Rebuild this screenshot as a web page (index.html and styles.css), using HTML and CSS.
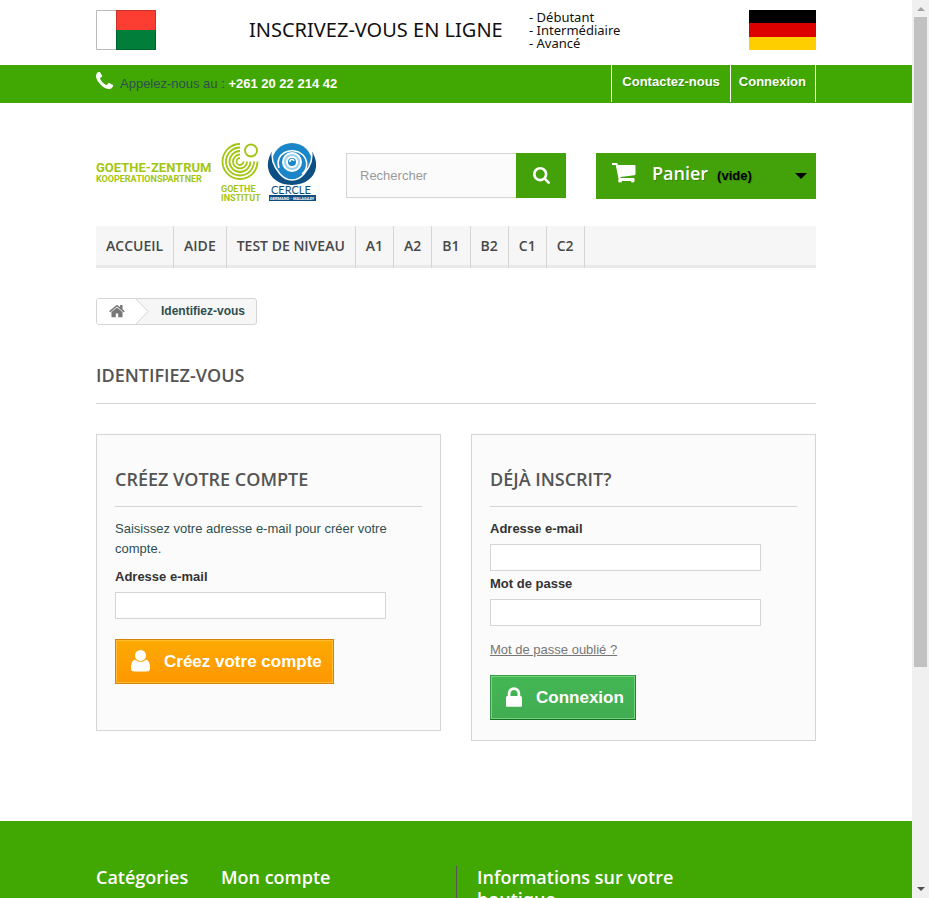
FILE: index.html
```
<!DOCTYPE html>
<html lang="fr">
<head>
<meta charset="utf-8">
<title>Identifiez-vous</title>
<meta name="viewport" content="width=device-width, initial-scale=1">
<link rel="stylesheet" href="styles.css">
</head>
<body>
<div class="page">
  <div class="container banner">
    <svg class="flag" width="60" height="40" viewBox="0 0 60 40" role="img" aria-label="Madagascar"><path fill="#fff" stroke="#bbb" d="M.5.5h20v39H.5z"/><path fill="#fc3d32" d="M20 0h40v20H20z"/><path fill="#007e3a" d="M20 20h40v20H20z"/><path fill="none" stroke="#000" stroke-opacity=".2" d="M20.5.5h39v39h-39z"/></svg>
    <p class="banner-title">INSCRIVEZ-VOUS EN LIGNE</p>
    <ul class="levels"><li>- Débutant</li><li>- Intermédiaire</li><li>- Avancé</li></ul>
    <svg class="flag" width="67" height="40" viewBox="0 0 67 40" role="img" aria-label="Allemagne"><path d="M0 0h67v14H0z"/><path fill="#d00" d="M0 13h67v14H0z"/><path fill="#ffce00" d="M0 27h67v13H0z"/></svg>
  </div>
  <nav class="topbar">
    <div class="container topbar-row">
      <p class="phone"><svg width="17" height="17" viewBox="192 256 1408 1408" aria-hidden="true"><path fill="#fff" d="M1600 1240q0 27-10 70.5t-21 68.5q-21 50-122 106-94 51-186 51-27 0-53-3.5t-57.5-12.5-47-14.5-55.5-20.5-49-18q-98-35-175-83-127-79-264-216t-216-264q-48-77-83-175-3-9-18-49t-20.5-55.5-14.5-47-12.5-57.5-3.5-53q0-92 51-186 56-101 106-122 25-11 68.5-21t70.5-10q14 0 21 3 18 6 53 76 11 19 30 54t35 63.5 31 53.5q3 4 17.5 25t21.5 35.5 7 28.5q0 20-28.5 50t-62 55-62 53-28.5 46q0 9 5 22.5t8.5 20.5 14 24 11.5 19q76 137 174 235t235 174q2 1 19 11.5t24 14 20.5 8.5 22.5 5q18 0 46-28.5t53-62 55-62 50-28.5q14 0 28.5 7t35.5 21.5 25 17.5q25 15 53.5 31t63.5 35 54 30q70 35 76 53 3 7 3 21z" transform="translate(0 128)"/></svg><span>Appelez-nous au : <strong>+261 20 22 214 42</strong></span></p>
      <div class="toplinks"><a class="contact" href="#">Contactez-nous</a><a href="#">Connexion</a></div>
    </div>
  </nav>
  <header class="container header">
    <a class="logo" href="#" aria-label="Accueil">
      <svg width="220" height="60" viewBox="0 0 220 60">
        <g fill="#a3c614" font-family="Roboto, sans-serif" font-weight="700">
          <text x="0" y="29" font-size="13">GOETHE-ZENTRUM</text>
          <text x="0" y="39" font-size="9">KOOPERATIONSPARTNER</text>
          <text x="125" y="49" font-size="9">GOETHE</text>
          <text x="125" y="58" font-size="9">INSTITUT</text>
        </g>
        <g fill="none" stroke="#a3c614" stroke-width="1.8">
          <circle cx="155" cy="7.500" r="6"/>
          <path d="M144 1a17.500 17.500 0 1 0 17.500 17.500M144 4.500a14 14 0 1 0 14 14M144 8a10.500 10.500 0 1 0 10.500 10.500M144 11.500a7 7 0 1 0 7 7M144 15a3.500 3.500 0 1 0 3.500 3.500"/>
        </g>
        <circle cx="196" cy="20" r="20" fill="#1a86c8"/>
        <path fill="#0d4f82" d="M177 7c-12 17-2 35 19 35s31-18 19-35c3 10-1 17-7 24-7 8-17 8-24 0-6-7-10-14-7-24z"/>
        <path fill="none" stroke="#fff" stroke-width="1.500" d="M177 6c-3 10 1 18 7 25 7 8 17 8 24 0 6-7 10-15 7-25M183 25c-5-14 12-23 24-13 6 7 4 15-1 19"/>
        <circle cx="196" cy="19" r="9" fill="#9dd2ee" stroke="#fff" stroke-width="2"/>
        <circle cx="196" cy="19" r="5" fill="#1a86c8" stroke="#fff" stroke-width="2"/>
        <path fill="none" stroke="#fff" stroke-width="1.500" d="M194 19a2 2 0 0 1 4-1"/>
        <text x="175" y="51" font-family="Lato, sans-serif" font-size="11" fill="#0d4f82">CERCLE</text>
        <path fill="#0d4f82" d="M173 52h47v6h-47z"/>
        <text x="174" y="57" font-family="Roboto, sans-serif" font-weight="700" font-size="4" fill="#fff">GERMANO - MALAGASY</text>
      </svg>
    </a>
    <form class="search"><input type="search" placeholder="Rechercher" aria-label="Rechercher"><button type="button" aria-label="Lancer la recherche"><svg width="17" height="17" viewBox="64 128 1664 1664"><path fill="#fff" d="M1216 832q0-185-131.500-316.500t-316.500-131.500-316.500 131.500-131.500 316.500 131.500 316.500 316.500 131.500 316.500-131.500 131.500-316.500zm512 832q0 52-38 90t-90 38q-54 0-90-38l-343-342q-179 124-399 124-143 0-273.500-55.500t-225-150-150-225-55.500-273.500 55.500-273.500 150-225 225-150 273.500-55.500 273.500 55.500 225 150 150 225 55.500 273.500q0 220-124 399l343 343q37 37 37 90z"/></svg></button></form>
    <a class="cart" href="#"><svg width="24" height="20" viewBox="0 0 24 20" aria-hidden="true"><path fill="#fff" d="M0 0h4.500q1 0 1.300 1L6 2h16.500q1 0 1 1v8q0 1-1 1.200L8.500 14l.2 1h13q.8 0 .8.900v2.100q0 1.600-1.800 1.600t-1.800-1.600H10q0 1.600-2 1.600T6.200 18q0-1 .4-2L3.700 2H0q-.5-1 0-2z"/></svg><b>Panier</b><span>(vide)</span><i class="caret"></i></a>
  </header>
  <div class="container">
    <nav class="menu"><a href="#">ACCUEIL</a><a href="#">AIDE</a><a href="#">TEST DE NIVEAU</a><a href="#">A1</a><a href="#">A2</a><a href="#">B1</a><a href="#">B2</a><a href="#">C1</a><a href="#">C2</a></nav>
    <div class="breadcrumb">
      <a href="#" aria-label="Accueil"><svg width="16" height="14" viewBox="64 230 1664 1306"><path fill="#777" d="M1472 992v480q0 26-19 45t-45 19h-384v-384h-256v384h-384q-26 0-45-19t-19-45v-480q0-1 .5-3t.5-3l575-474 575 474q1 2 1 6zm223-69l-62 74q-8 9-21 11h-3q-13 0-21-7l-692-577-692 577q-12 8-24 7-13-2-21-11l-62-74q-8-10-7-23.500t11-21.500l719-599q32-26 76-26t76 26l244 204v-195q0-14 9-23t23-9h192q14 0 23 9t9 23v408l219 182q10 8 11 21.500t-7 23.500z"/></svg></a>
      <svg class="arrow" width="13" height="25" viewBox="0 0 13 25" aria-hidden="true"><path fill="#fff" d="M0 0l12 12.500L0 25z"/><path fill="none" stroke="#d6d4d4" d="M0 0l12 12.500L0 25"/></svg>
      <span>Identifiez-vous</span>
    </div>
    <h1>IDENTIFIEZ-VOUS</h1>
    <div class="boxes">
      <form class="box create">
        <h2>CRÉEZ VOTRE COMPTE</h2>
        <p>Saisissez votre adresse e-mail pour créer votre compte.</p>
        <label for="new-email">Adresse e-mail</label>
        <input id="new-email" type="email">
        <button class="btn orange" type="button"><svg width="19" height="22" viewBox="0 0 19 22" aria-hidden="true"><circle cx="9.500" cy="5.500" r="5.500" fill="#fff"/><path fill="#fff" d="M4 9.500q5.500 4.500 11 0 4 1 4 8.500 0 3.500-3.500 3.500h-12Q0 21.500 0 18q0-7.500 4-8.500z"/><path fill="none" stroke="#ffa502" stroke-width=".6" d="M4 9.300q5.500 4.500 11 0"/></svg><span>Créez votre compte</span></button>
      </form>
      <form class="box login">
        <h2>DÉJÀ INSCRIT?</h2>
        <label for="email">Adresse e-mail</label>
        <input id="email" type="email">
        <label for="password">Mot de passe</label>
        <input id="password" type="password">
        <a class="lost" href="#">Mot de passe oublié ?</a>
        <button class="btn green" type="button"><svg width="16" height="20" viewBox="320 128 1152 1408" aria-hidden="true"><path fill="#fff" d="M640 768h512v-192q0-106-75-181t-181-75-181 75-75 181v192zm832 96v576q0 40-28 68t-68 28h-960q-40 0-68-28t-28-68v-576q0-40 28-68t68-28h32v-192q0-184 132-316t316-132 316 132 132 316v192h32q40 0 68 28t28 68z"/></svg><span>Connexion</span></button>
      </form>
    </div>
  </div>
  <footer>
    <div class="container footer-row"><h4>Catégories</h4><h4>Mon compte</h4><h4 class="info">Informations sur votre boutique</h4></div>
  </footer>
</div>
<div class="scrollbar" aria-hidden="true"><i class="up"></i><div class="thumb"></div><i class="down"></i></div>
</body>
</html>
```
FILE: styles.css
```
* { box-sizing: border-box; }
body {
  margin: 0;
  height: 100vh;
  display: flex;
  overflow: hidden;
  background: #fff;
  color: #2f4f4f;
  font: 13px/20px "Liberation Sans", Arial, sans-serif;
}
h1, h2, h4, p, ul { margin: 0; padding: 0; }
ul { list-style: none; }
a { color: inherit; text-decoration: none; }
svg { display: block; flex: none; }
button, input { font: inherit; border-radius: 0; }
button { cursor: pointer; }
.page { flex: 1; min-width: 0; overflow: hidden; }
.container { max-width: 750px; margin: 0 auto; padding: 0 15px; }

.banner { display: flex; height: 65px; padding-top: 10px; color: #111; }
.banner-title { min-width: 256px; margin: 6px 0 0 93px; font: 20px/28px "Noto Sans", sans-serif; white-space: nowrap; }
.levels { margin: 1px auto 0 24px; font: 13px/13px "Noto Sans", sans-serif; white-space: nowrap; }

.topbar { background: #41a803; }
.topbar-row { display: flex; justify-content: space-between; height: 38px; }
.phone { display: flex; gap: 7px; padding-top: 7px; }
.phone span { padding-top: 2px; }
.phone strong { color: #fff; }
.toplinks { display: flex; height: 37px; color: #fff; font-weight: 700; line-height: 18px; text-shadow: 1px 1px rgba(0, 0, 0, .2); }
.toplinks a { padding: 8px 9px 0 8px; border-right: 1px solid #fff; }
.toplinks .contact { padding: 8px 10px 0; border-left: 1px solid #fff; }

.header { display: flex; gap: 30px; padding-top: 40px; height: 123px; }
.search { display: flex; flex: 1; min-width: 0; height: 45px; margin-top: 10px; }
.search input { flex: 1; min-width: 0; padding: 0 13px; border: 1px solid #d6d4d4; border-right: 0; background: #fbfbfb; }
.search input::placeholder { color: #999; }
.search button { width: 50px; padding: 0; border: 0; background: #43a209; display: grid; place-items: center; }
.cart { display: flex; flex: none; align-items: baseline; width: 220px; height: 46px; margin-top: 10px; padding: 8px 9px 8px 16px; background: #43a209; color: #000; font-weight: 700; text-shadow: 1px 1px rgba(0, 0, 0, .2); }
.cart svg { align-self: flex-start; margin-top: 2px; }
.cart b { margin: 0 9px 0 16px; color: #fff; font: 600 18px/25px "Open Sans", sans-serif; }
.caret { align-self: center; margin-left: auto; border: 6px solid transparent; border-top-color: #000; border-bottom: 0; }

.menu { display: flex; background: #f6f6f6; border-bottom: 3px solid #e9e9e9; }
.menu a { height: 42px; margin-bottom: -3px; padding: 9px 10px; border-right: 1px solid #d6d4d4; color: #484848; font: 600 14px/22px "Open Sans", sans-serif; }

.breadcrumb { display: inline-flex; margin-top: 30px; overflow: hidden; border: 1px solid #d6d4d4; border-radius: 3px; background: #f6f6f6; font-size: 12px; font-weight: 700; line-height: 24px; }
.breadcrumb a { padding: 5px 11px 0 12px; background: #fff; }
.breadcrumb span { padding: 0 11px 0 12px; }
h1, h2 { color: #555454; border-bottom: 1px solid #d6d4d4; font: 600 18px/22px "Open Sans", sans-serif; }
h1 { margin-top: 34px; padding-bottom: 17px; }

.boxes { display: grid; grid-template-columns: 1fr 1fr; gap: 30px; align-items: start; margin-top: 30px; }
.box { padding: 33px 18px 20px; border: 1px solid #d6d4d4; background: #fbfbfb; }
.create { padding-bottom: 46px; }
h2 { padding-bottom: 16px; margin-bottom: 12px; }
.box p { margin-bottom: 8px; }
.box label { display: block; color: #333; font-weight: 700; }
.box input { display: block; width: 100%; max-width: 271px; height: 27px; margin: 5px 0 3px; border: 1px solid #d6d4d4; background: #fff; }
.lost { display: block; width: max-content; margin: 14px 0 15px; color: #777; text-decoration: underline; }
.btn { display: flex; align-items: center; gap: 14px; height: 45px; padding: 0 11px 0 15px; border: 1px solid; color: #fff; font-size: 17px; font-weight: 700; }
.btn svg { margin-bottom: 2px; }
.orange { margin-top: 20px; border-color: #d88206; background: linear-gradient(#fdaa02, #fe9702); box-shadow: inset 0 0 0 1px #ffbc34; }
.green { border-color: #399a49 #247f32 #1a6d27 #399a49; background: linear-gradient(#43b754, #42ac52); box-shadow: inset 0 0 0 1px #74d578; }

footer { height: 440px; margin-top: 80px; padding-top: 45px; background: #41a803; }
.footer-row { display: grid; grid-template-columns: 125px 235px 1fr; color: #fff; }
h4 { font: 600 18px/22px "Open Sans", sans-serif; }
.info { min-height: 240px; padding: 0 120px 0 20px; border-left: 1px solid #555454; }

.scrollbar { display: flex; flex-direction: column; align-items: center; width: 17px; background: #f0f0f0; }
.thumb { width: 13px; height: 650px; margin-top: 6px; background: #c1c1c1; }
.up, .down { border: 4px solid transparent; }
.up { margin-top: 7px; border-top: 0; border-bottom-color: #a3a3a3; }
.down { margin: auto 0 7px; border-bottom: 0; border-top-color: #505050; }
```
